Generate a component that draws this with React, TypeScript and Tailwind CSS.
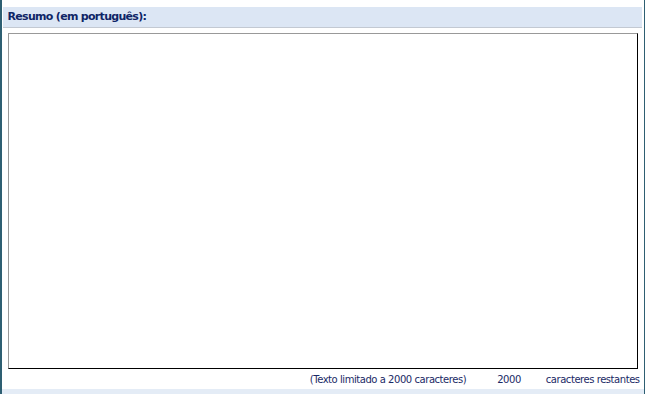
import React from 'react';

const App: React.FC = () => {
  return (
    <div className="w-[646px] h-[394px] bg-white overflow-hidden" style={{ fontFamily: '"DejaVu Sans", Verdana, sans-serif' }}>
      <div className="flex h-full">
        <div className="w-[2px] bg-[#2e5f72]" />
        <div className="flex-1 flex flex-col">
          <div className="h-[7px]" />
          <div className="h-[21px] bg-[#dce6f4] border-b border-[#c3c9d2] flex items-center pl-[5px] ml-[1px] mr-[2px]">
            <span className="text-[11px] font-bold text-[#0f2566] tracking-[-0.7px]">Resumo (em português):</span>
          </div>
          <div className="pl-[6px] pr-[6px] pt-[5px]">
            <textarea className="block w-[630px] h-[336px] resize-none border border-t-[#999] border-l-[#999] border-b-black border-r-black bg-white outline-none" />
          </div>
          <div className="flex justify-end items-center h-[20px] pr-[4px] text-[10px] text-[#1a2a66] tracking-[-0.45px]">
            <span>(Texto limitado a 2000 caracteres)</span>
            <span className="ml-[31px]">2000</span>
            <span className="ml-[25px]">caracteres restantes</span>
          </div>
          <div className="flex-1 bg-[#e4ecf6]" />
        </div>
        <div className="w-[2px] bg-[#2e5f72]" />
        <div className="w-[1px]" />
      </div>
    </div>
  );
};

export default App;
